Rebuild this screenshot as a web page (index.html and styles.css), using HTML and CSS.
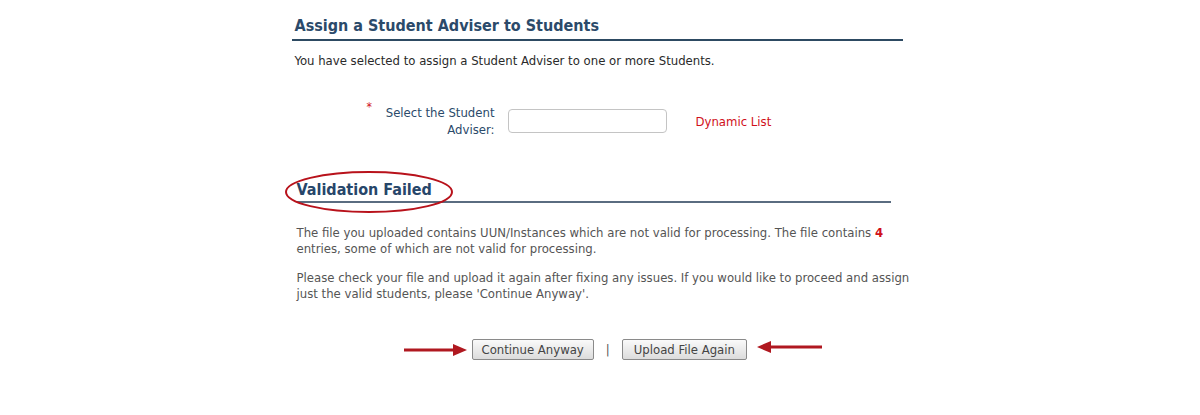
FILE: index.html
```html
<!DOCTYPE html>
<html>
<head>
<meta charset="utf-8">
<link rel="stylesheet" href="styles.css">
</head>
<body>
<div class="page">
  <h1 class="title">Assign a Student Adviser to Students</h1>
  <p class="intro">You have selected to assign a Student Adviser to one or more Students.</p>

  <div class="form-row">
    <span class="req">*</span>
    <label class="label" for="adv">Select the Student Adviser:</label>
    <input class="field" id="adv" type="text">
    <span class="dyn">Dynamic List</span>
  </div>

  <div class="validation">
    <div class="vhead">
      <h2 class="vtitle">Validation Failed</h2>
      <svg class="ellipse" width="172" height="46" viewBox="0 0 172 46">
        <ellipse cx="85" cy="23" rx="83" ry="20" fill="none" stroke="#b8121b" stroke-width="2"/>
      </svg>
    </div>
    <p class="vtext">The file you uploaded contains UUN/Instances which are not valid for processing. The file contains <b class="count">4</b> entries, some of which are not valid for processing.</p>
    <p class="vtext">Please check your file and upload it again after fixing any issues. If you would like to proceed and assign just the valid students, please 'Continue Anyway'.</p>
  </div>

  <div class="actions">
    <svg class="arrow" width="66" height="14" viewBox="0 0 66 14">
      <line x1="1" y1="7" x2="52" y2="7" stroke="#b01820" stroke-width="3"/>
      <polygon points="50,1 64,7 50,13" fill="#b01820"/>
    </svg>
    <button class="btn" type="button">Continue Anyway</button>
    <span class="sep">|</span>
    <button class="btn btn-wide" type="button">Upload File Again</button>
    <svg class="arrow arrow-left" width="68" height="14" viewBox="0 0 68 14">
      <line x1="14" y1="7" x2="67" y2="7" stroke="#b01820" stroke-width="3"/>
      <polygon points="16,1 2,7 16,13" fill="#b01820"/>
    </svg>
  </div>
</div>
</body>
</html>
```
FILE: styles.css
```css
html, body {
  margin: 0;
  padding: 0;
  background: #fff;
}
body {
  font-family: "DejaVu Sans Condensed", "DejaVu Sans", sans-serif;
  font-size: 13px;
  color: #333;
}
.page {
  width: 611px;
  margin: 0 auto;
  padding-top: 16px;
  position: relative;
  left: -3px;
}
.title {
  margin: 0;
  padding: 0 0 4px 3px;
  font-size: 16px;
  font-weight: bold;
  color: #2b4a6a;
  border-bottom: 2px solid #2d4a62;
  line-height: 19px;
}
.intro {
  margin: 12px 0 0 3px;
  line-height: 16px;
  color: #2a2a2a;
}
.form-row {
  display: flex;
  align-items: center;
  margin-top: 35px;
  margin-left: 75px;
}
.req {
  color: #d0101a;
  align-self: flex-start;
  margin-top: -4px;
  width: 12px;
  font-size: 12px;
}
.label {
  width: 116px;
  text-align: right;
  color: #2b4a6a;
  line-height: 17px;
}
.field {
  margin-left: 13px;
  width: 159px;
  height: 24px;
  box-sizing: border-box;
  border: 1px solid #c4c4c4;
  border-radius: 4px;
  background: #fff;
  font: inherit;
}
.dyn {
  margin-left: 29px;
  color: #d0101a;
}
.validation {
  margin-top: 42px;
  margin-left: 5px;
  width: 618px;
}
.vhead {
  position: relative;
  width: 594px;
}
.vtitle {
  margin: 0;
  font-size: 16px;
  font-weight: bold;
  color: #27466a;
  line-height: 19px;
  padding-bottom: 2px;
  border-bottom: 2px solid #5a6c80;
}
.ellipse {
  position: absolute;
  left: -13px;
  top: -11px;
}
.vtext {
  margin: 22px 0 0 0;
  color: #555;
  line-height: 16px;
}
.vtext + .vtext {
  margin-top: 13px;
}
.count {
  color: #d0101a;
}
.actions {
  display: flex;
  align-items: center;
  margin-top: 37px;
  margin-left: 111px;
}
.arrow {
  display: block;
  margin-right: 3px;
}
.arrow-left {
  margin-left: 8px;
  margin-top: -6px;
}
.btn {
  font: inherit;
  color: #444;
  height: 21px;
  padding: 0 9px;
  border: 1px solid #8a8a8a;
  border-radius: 2px;
  background: linear-gradient(#fafafa, #dcdcdc);
}
.btn-wide {
  padding: 0 11px;
}
.sep {
  color: #555;
  margin: 0 12px;
}
```
